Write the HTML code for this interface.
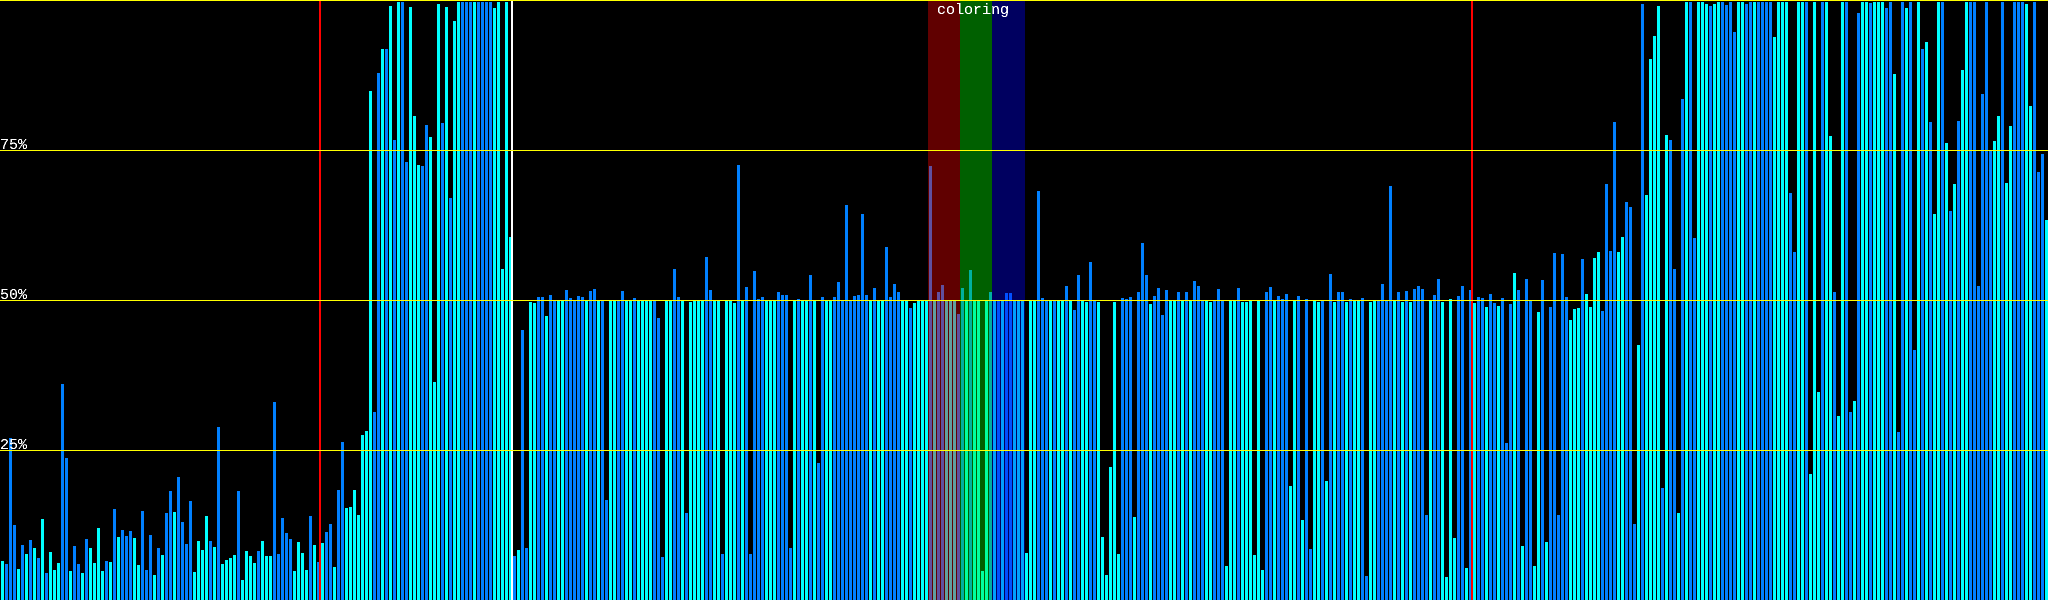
<!DOCTYPE html>
<html><head><meta charset="utf-8"><title>coloring</title>
<style>
html,body{margin:0;padding:0;background:#000;width:2048px;height:600px;overflow:hidden}
#w{position:relative;width:2048px;height:600px;overflow:hidden;background:#000}
#b{position:absolute;left:0;top:0;width:2048px;height:600px;display:flex;align-items:stretch}
#b s,#b u{display:block;flex:none;width:3px;margin-left:1px;text-decoration:none}
#b s{background:#00ffff}
#b u{background:#0080ff}
.p{position:absolute}
.t{position:absolute;color:#fff;font:15px/15px "Liberation Mono",monospace;white-space:pre;filter:url(#px)}
</style></head><body>
<svg width="0" height="0" style="position:absolute"><filter id="px" x="0" y="0" width="100%" height="100%" color-interpolation-filters="sRGB"><feComponentTransfer><feFuncA type="discrete" tableValues="0 0 1 1 1"/></feComponentTransfer></filter></svg>
<div id="w"><div id="b">
<s style=margin-top:561px></s><u style=margin-top:564px></u><u style=margin-top:438px></u><u style=margin-top:525px></u><s style=margin-top:569px></s><u style=margin-top:545px></u><s style=margin-top:554px></s><u style=margin-top:540px></u><s style=margin-top:548px></s><u style=margin-top:558px></u>
<s style=margin-top:519px></s><u style=margin-top:573px></u><s style=margin-top:552px></s><s style=margin-top:570px></s><s style=margin-top:563px></s><u style=margin-top:384px></u><u style=margin-top:458px></u><s style=margin-top:571px></s><u style=margin-top:546px></u><u style=margin-top:564px></u>
<s style=margin-top:573px></s><u style=margin-top:539px></u><s style=margin-top:548px></s><s style=margin-top:563px></s><s style=margin-top:528px></s><s style=margin-top:571px></s><u style=margin-top:561px></u><s style=margin-top:562px></s><u style=margin-top:509px></u><s style=margin-top:537px></s>
<u style=margin-top:530px></u><u style=margin-top:536px></u><u style=margin-top:531px></u><s style=margin-top:538px></s><s style=margin-top:565px></s><u style=margin-top:511px></u><u style=margin-top:570px></u><u style=margin-top:535px></u><s style=margin-top:575px></s><u style=margin-top:548px></u>
<s style=margin-top:555px></s><u style=margin-top:513px></u><u style=margin-top:491px></u><s style=margin-top:512px></s><u style=margin-top:477px></u><u style=margin-top:522px></u><u style=margin-top:544px></u><u style=margin-top:501px></u><s style=margin-top:572px></s><s style=margin-top:541px></s>
<s style=margin-top:550px></s><s style=margin-top:516px></s><u style=margin-top:541px></u><s style=margin-top:547px></s><u style=margin-top:427px></u><s style=margin-top:564px></s><s style=margin-top:560px></s><s style=margin-top:558px></s><s style=margin-top:555px></s><u style=margin-top:491px></u>
<s style=margin-top:580px></s><s style=margin-top:551px></s><s style=margin-top:556px></s><s style=margin-top:563px></s><u style=margin-top:551px></u><s style=margin-top:541px></s><s style=margin-top:556px></s><s style=margin-top:556px></s><u style=margin-top:402px></u><u style=margin-top:554px></u>
<u style=margin-top:518px></u><u style=margin-top:533px></u><u style=margin-top:539px></u><s style=margin-top:571px></s><s style=margin-top:542px></s><s style=margin-top:553px></s><s style=margin-top:570px></s><u style=margin-top:516px></u><s style=margin-top:545px></s><u style=margin-top:562px></u>
<s style=margin-top:543px></s><u style=margin-top:532px></u><u style=margin-top:524px></u><s style=margin-top:567px></s><u style=margin-top:490px></u><u style=margin-top:442px></u><s style=margin-top:508px></s><s style=margin-top:507px></s><s style=margin-top:490px></s><s style=margin-top:515px></s>
<s style=margin-top:435px></s><s style=margin-top:431px></s><s style=margin-top:91px></s><u style=margin-top:412px></u><u style=margin-top:73px></u><s style=margin-top:49px></s><u style=margin-top:49px></u><s style=margin-top:6px></s><u style=margin-top:140px></u><s style=margin-top:2px></s>
<u style=margin-top:2px></u><u style=margin-top:162px></u><s style=margin-top:7px></s><s style=margin-top:116px></s><s style=margin-top:165px></s><u style=margin-top:166px></u><u style=margin-top:125px></u><s style=margin-top:137px></s><s style=margin-top:382px></s><s style=margin-top:4px></s>
<u style=margin-top:123px></u><s style=margin-top:7px></s><u style=margin-top:198px></u><s style=margin-top:21px></s><s style=margin-top:2px></s><u style=margin-top:2px></u><u style=margin-top:2px></u><u style=margin-top:2px></u><s style=margin-top:2px></s><u style=margin-top:2px></u>
<u style=margin-top:2px></u><u style=margin-top:2px></u><u style=margin-top:2px></u><s style=margin-top:8px></s><s style=margin-top:2px></s><s style=margin-top:269px></s><s style=margin-top:2px></s><s style=margin-top:237px></s><u style=margin-top:556px></u><s style=margin-top:550px></s>
<u style=margin-top:330px></u><u style=margin-top:548px></u><s style=margin-top:302px></s><s style=margin-top:303px></s><u style=margin-top:297px></u><u style=margin-top:297px></u><s style=margin-top:316px></s><u style=margin-top:295px></u><u style=margin-top:300px></u><s style=margin-top:300px></s>
<s style=margin-top:300px></s><u style=margin-top:290px></u><u style=margin-top:298px></u><u style=margin-top:300px></u><u style=margin-top:296px></u><u style=margin-top:297px></u><s style=margin-top:300px></s><u style=margin-top:291px></u><u style=margin-top:289px></u><s style=margin-top:300px></s>
<u style=margin-top:300px></u><u style=margin-top:500px></u><s style=margin-top:300px></s><s style=margin-top:300px></s><u style=margin-top:300px></u><u style=margin-top:291px></u><s style=margin-top:300px></s><s style=margin-top:300px></s><u style=margin-top:298px></u><s style=margin-top:300px></s>
<s style=margin-top:300px></s><s style=margin-top:300px></s><s style=margin-top:300px></s><u style=margin-top:300px></u><u style=margin-top:318px></u><u style=margin-top:557px></u><s style=margin-top:300px></s><s style=margin-top:300px></s><u style=margin-top:269px></u><u style=margin-top:297px></u>
<s style=margin-top:300px></s><u style=margin-top:513px></u><s style=margin-top:302px></s><s style=margin-top:300px></s><s style=margin-top:300px></s><s style=margin-top:300px></s><u style=margin-top:257px></u><u style=margin-top:290px></u><s style=margin-top:300px></s><s style=margin-top:300px></s>
<u style=margin-top:554px></u><s style=margin-top:300px></s><s style=margin-top:300px></s><s style=margin-top:303px></s><u style=margin-top:165px></u><s style=margin-top:300px></s><u style=margin-top:287px></u><u style=margin-top:554px></u><u style=margin-top:271px></u><u style=margin-top:299px></u>
<u style=margin-top:297px></u><s style=margin-top:300px></s><s style=margin-top:300px></s><s style=margin-top:300px></s><u style=margin-top:292px></u><u style=margin-top:295px></u><u style=margin-top:295px></u><u style=margin-top:548px></u><s style=margin-top:300px></s><u style=margin-top:299px></u>
<s style=margin-top:300px></s><s style=margin-top:300px></s><u style=margin-top:275px></u><s style=margin-top:300px></s><u style=margin-top:463px></u><u style=margin-top:297px></u><s style=margin-top:300px></s><s style=margin-top:300px></s><u style=margin-top:297px></u><u style=margin-top:282px></u>
<u style=margin-top:300px></u><u style=margin-top:205px></u><u style=margin-top:300px></u><u style=margin-top:296px></u><u style=margin-top:295px></u><u style=margin-top:214px></u><u style=margin-top:295px></u><s style=margin-top:300px></s><u style=margin-top:288px></u><s style=margin-top:300px></s>
<s style=margin-top:300px></s><u style=margin-top:247px></u><u style=margin-top:297px></u><u style=margin-top:284px></u><u style=margin-top:292px></u><s style=margin-top:300px></s><s style=margin-top:300px></s><u style=margin-top:308px></u><s style=margin-top:303px></s><s style=margin-top:300px></s>
<s style=margin-top:300px></s><s style=margin-top:300px></s><u style=margin-top:166px></u><s style=margin-top:300px></s><u style=margin-top:292px></u><u style=margin-top:285px></u><s style=margin-top:300px></s><s style=margin-top:300px></s><s style=margin-top:300px></s><u style=margin-top:314px></u>
<u style=margin-top:288px></u><s style=margin-top:300px></s><u style=margin-top:270px></u><s style=margin-top:300px></s><s style=margin-top:300px></s><s style=margin-top:571px></s><s style=margin-top:300px></s><u style=margin-top:292px></u><s style=margin-top:300px></s><u style=margin-top:300px></u>
<s style=margin-top:300px></s><u style=margin-top:293px></u><u style=margin-top:293px></u><s style=margin-top:300px></s><s style=margin-top:300px></s><s style=margin-top:300px></s><s style=margin-top:553px></s><s style=margin-top:300px></s><s style=margin-top:300px></s><u style=margin-top:191px></u>
<u style=margin-top:298px></u><u style=margin-top:300px></u><s style=margin-top:300px></s><u style=margin-top:300px></u><s style=margin-top:300px></s><s style=margin-top:300px></s><u style=margin-top:286px></u><s style=margin-top:300px></s><u style=margin-top:310px></u><u style=margin-top:275px></u>
<s style=margin-top:300px></s><s style=margin-top:302px></s><u style=margin-top:262px></u><u style=margin-top:300px></u><s style=margin-top:302px></s><s style=margin-top:537px></s><s style=margin-top:575px></s><s style=margin-top:467px></s><s style=margin-top:302px></s><s style=margin-top:554px></s>
<u style=margin-top:298px></u><u style=margin-top:299px></u><u style=margin-top:297px></u><s style=margin-top:517px></s><u style=margin-top:292px></u><u style=margin-top:243px></u><u style=margin-top:275px></u><s style=margin-top:304px></s><u style=margin-top:296px></u><u style=margin-top:288px></u>
<u style=margin-top:315px></u><u style=margin-top:290px></u><s style=margin-top:300px></s><s style=margin-top:300px></s><u style=margin-top:292px></u><s style=margin-top:300px></s><u style=margin-top:292px></u><s style=margin-top:300px></s><u style=margin-top:281px></u><u style=margin-top:286px></u>
<u style=margin-top:300px></u><s style=margin-top:300px></s><s style=margin-top:302px></s><u style=margin-top:300px></u><u style=margin-top:289px></u><u style=margin-top:300px></u><s style=margin-top:566px></s><s style=margin-top:300px></s><s style=margin-top:300px></s><u style=margin-top:288px></u>
<s style=margin-top:302px></s><s style=margin-top:302px></s><s style=margin-top:300px></s><s style=margin-top:555px></s><s style=margin-top:300px></s><s style=margin-top:570px></s><u style=margin-top:292px></u><u style=margin-top:287px></u><s style=margin-top:300px></s><u style=margin-top:296px></u>
<u style=margin-top:299px></u><u style=margin-top:294px></u><s style=margin-top:486px></s><s style=margin-top:300px></s><u style=margin-top:296px></u><s style=margin-top:520px></s><u style=margin-top:299px></u><u style=margin-top:549px></u><s style=margin-top:300px></s><s style=margin-top:302px></s>
<u style=margin-top:300px></u><s style=margin-top:481px></s><u style=margin-top:274px></u><s style=margin-top:302px></s><u style=margin-top:292px></u><u style=margin-top:292px></u><s style=margin-top:302px></s><u style=margin-top:299px></u><s style=margin-top:300px></s><s style=margin-top:300px></s>
<u style=margin-top:298px></u><u style=margin-top:576px></u><s style=margin-top:302px></s><s style=margin-top:300px></s><u style=margin-top:300px></u><u style=margin-top:284px></u><u style=margin-top:300px></u><u style=margin-top:186px></u><s style=margin-top:300px></s><u style=margin-top:292px></u>
<s style=margin-top:302px></s><u style=margin-top:291px></u><s style=margin-top:302px></s><u style=margin-top:289px></u><u style=margin-top:286px></u><u style=margin-top:289px></u><u style=margin-top:515px></u><s style=margin-top:300px></s><u style=margin-top:295px></u><u style=margin-top:279px></u>
<s style=margin-top:302px></s><s style=margin-top:577px></s><s style=margin-top:299px></s><s style=margin-top:538px></s><u style=margin-top:296px></u><u style=margin-top:286px></u><s style=margin-top:568px></s><u style=margin-top:290px></u><s style=margin-top:303px></s><u style=margin-top:297px></u>
<u style=margin-top:298px></u><s style=margin-top:307px></s><u style=margin-top:294px></u><u style=margin-top:303px></u><s style=margin-top:306px></s><u style=margin-top:298px></u><u style=margin-top:443px></u><u style=margin-top:304px></u><s style=margin-top:273px></s><u style=margin-top:290px></u>
<s style=margin-top:546px></s><u style=margin-top:279px></u><u style=margin-top:300px></u><s style=margin-top:566px></s><s style=margin-top:312px></s><u style=margin-top:280px></u><s style=margin-top:542px></s><u style=margin-top:307px></u><u style=margin-top:253px></u><u style=margin-top:515px></u>
<u style=margin-top:254px></u><u style=margin-top:297px></u><s style=margin-top:320px></s><s style=margin-top:309px></s><s style=margin-top:308px></s><u style=margin-top:259px></u><s style=margin-top:294px></s><s style=margin-top:307px></s><s style=margin-top:258px></s><s style=margin-top:252px></s>
<u style=margin-top:311px></u><u style=margin-top:184px></u><u style=margin-top:251px></u><u style=margin-top:122px></u><s style=margin-top:252px></s><s style=margin-top:237px></s><u style=margin-top:202px></u><u style=margin-top:207px></u><u style=margin-top:524px></u><s style=margin-top:345px></s>
<u style=margin-top:4px></u><s style=margin-top:195px></s><s style=margin-top:59px></s><s style=margin-top:36px></s><s style=margin-top:6px></s><u style=margin-top:488px></u><s style=margin-top:135px></s><u style=margin-top:140px></u><u style=margin-top:269px></u><s style=margin-top:513px></s>
<u style=margin-top:99px></u><s style=margin-top:2px></s><u style=margin-top:2px></u><u style=margin-top:238px></u><s style=margin-top:2px></s><s style=margin-top:2px></s><s style=margin-top:4px></s><u style=margin-top:6px></u><s style=margin-top:4px></s><s style=margin-top:2px></s>
<u style=margin-top:2px></u><u style=margin-top:5px></u><u style=margin-top:2px></u><u style=margin-top:32px></u><s style=margin-top:2px></s><s style=margin-top:2px></s><u style=margin-top:4px></u><u style=margin-top:2px></u><s style=margin-top:2px></s><u style=margin-top:2px></u>
<u style=margin-top:2px></u><u style=margin-top:2px></u><u style=margin-top:2px></u><s style=margin-top:37px></s><s style=margin-top:2px></s><s style=margin-top:2px></s><s style=margin-top:2px></s><u style=margin-top:193px></u><u style=margin-top:252px></u><s style=margin-top:2px></s>
<s style=margin-top:2px></s><u style=margin-top:2px></u><s style=margin-top:474px></s><s style=margin-top:2px></s><s style=margin-top:392px></s><u style=margin-top:2px></u><s style=margin-top:2px></s><s style=margin-top:136px></s><u style=margin-top:292px></u><s style=margin-top:416px></s>
<s style=margin-top:2px></s><u style=margin-top:2px></u><u style=margin-top:412px></u><s style=margin-top:401px></s><u style=margin-top:13px></u><s style=margin-top:2px></s><s style=margin-top:2px></s><u style=margin-top:3px></u><s style=margin-top:2px></s><s style=margin-top:2px></s>
<s style=margin-top:2px></s><u style=margin-top:8px></u><u style=margin-top:2px></u><s style=margin-top:74px></s><u style=margin-top:432px></u><u style=margin-top:2px></u><s style=margin-top:8px></s><u style=margin-top:2px></u><u style=margin-top:350px></u><s style=margin-top:2px></s>
<u style=margin-top:49px></u><s style=margin-top:42px></s><u style=margin-top:122px></u><s style=margin-top:214px></s><s style=margin-top:2px></s><u style=margin-top:2px></u><s style=margin-top:143px></s><u style=margin-top:211px></u><s style=margin-top:184px></s><u style=margin-top:121px></u>
<s style=margin-top:70px></s><s style=margin-top:2px></s><u style=margin-top:2px></u><u style=margin-top:2px></u><u style=margin-top:286px></u><u style=margin-top:94px></u><u style=margin-top:2px></u><u style=margin-top:150px></u><s style=margin-top:141px></s><s style=margin-top:116px></s>
<u style=margin-top:2px></u><s style=margin-top:183px></s><s style=margin-top:126px></s><u style=margin-top:2px></u><u style=margin-top:2px></u><u style=margin-top:2px></u><s style=margin-top:4px></s><s style=margin-top:106px></s><u style=margin-top:2px></u><u style=margin-top:172px></u>
<u style=margin-top:154px></u><s style=margin-top:220px></s>
</div>
<div class="p" style="left:928px;top:0;width:32px;height:600px;background:rgba(255,0,0,.376)"></div>
<div class="p" style="left:960px;top:0;width:32px;height:600px;background:rgba(0,255,0,.376)"></div>
<div class="p" style="left:992px;top:0;width:33px;height:600px;background:rgba(0,0,255,.376)"></div>
<div class="p" style="left:319px;top:0;width:2px;height:600px;background:#f00"></div>
<div class="p" style="left:1471px;top:0;width:2px;height:600px;background:#f00"></div>
<div class="p" style="left:511px;top:0;width:2px;height:600px;background:#fff"></div>
<div class="p" style="left:0;top:0;width:2048px;height:1px;background:#ff0"></div>
<div class="p" style="left:0;top:150px;width:2048px;height:1px;background:#ff0"></div>
<div class="p" style="left:0;top:300px;width:2048px;height:1px;background:#ff0"></div>
<div class="p" style="left:0;top:450px;width:2048px;height:1px;background:#ff0"></div>
<div class="t" style="left:0;top:138px">75%</div>
<div class="t" style="left:0;top:288px">50%</div>
<div class="t" style="left:0;top:438px">25%</div>
<div class="t" style="left:937px;top:3px">coloring</div>
</div></body></html>
